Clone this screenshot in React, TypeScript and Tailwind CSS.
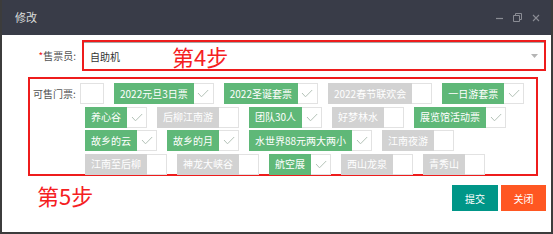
import React from "react";

type Item = { t: string; on: boolean };

const rows: Item[][] = [
  [
    { t: "2022元旦3日票", on: true },
    { t: "2022圣诞套票", on: true },
    { t: "2022春节联欢会", on: false },
    { t: "一日游套票", on: true },
  ],
  [
    { t: "养心谷", on: true },
    { t: "后柳江南游", on: false },
    { t: "团队30人", on: true },
    { t: "好梦林水", on: false },
    { t: "展览馆活动票", on: true },
  ],
  [
    { t: "故乡的云", on: true },
    { t: "故乡的月", on: true },
    { t: "水世界88元两大两小", on: true },
    { t: "江南夜游", on: false },
  ],
  [
    { t: "江南至后柳", on: false },
    { t: "神龙大峡谷", on: false },
    { t: "航空展", on: true },
    { t: "西山龙泉", on: false },
    { t: "青秀山", on: false },
  ],
];

function Check({ on }: { on: boolean }) {
  return (
    <span className="flex h-full w-[20px] items-center justify-center border border-l-0 border-[#e2e2e2] bg-white">
      {on && (
        <svg width="12" height="9" viewBox="0 0 12 9">
          <path d="M1 4 L4.5 7.8 L11.2 1" fill="none" stroke="#b3c2b7" strokeWidth="1" />
        </svg>
      )}
    </span>
  );
}

function Tag({ item }: { item: Item }) {
  return (
    <div className="flex h-[21px]">
      <span
        className={
          item.on
            ? "flex items-center bg-[#5fb878] px-[6px] text-[10px] leading-none text-white"
            : "flex items-center bg-[#d2d2d2] px-[6px] text-[10px] leading-none text-white"
        }
      >
        {item.t}
      </span>
      <Check on={item.on} />
    </div>
  );
}

export default function App() {
  return (
    <div className="flex h-[234px] w-[553px] flex-col border-x-2 border-b-2 border-[#3c3c3c] bg-white font-['Noto_Sans_CJK_SC',sans-serif]">
      <div className="flex h-[35px] shrink-0 items-center justify-between bg-[#393c48] pl-[13px] pr-[11px]">
        <span className="text-[11px] text-[#dcdcdc]">修改</span>
        <div className="flex items-center gap-[10px]">
          <svg width="7" height="8" viewBox="0 0 7 8">
            <path d="M0 4.5 H7" stroke="#8a8c94" strokeWidth="1.2" />
          </svg>
          <svg width="9" height="9" viewBox="0 0 9 9">
            <path d="M0.5 2.5 H6.5 V8.5 H0.5 Z M2.5 2.5 V0.5 H8.5 V6.5 H6.5" fill="none" stroke="#8a8c94" strokeWidth="1" />
          </svg>
          <svg width="8" height="8" viewBox="0 0 8 8">
            <path d="M1 1 L7 7 M7 1 L1 7" stroke="#8a8c94" strokeWidth="1.1" />
          </svg>
        </div>
      </div>

      <div className="flex flex-1 flex-col">
        <div className="mt-[5px] flex items-center">
          <div className="w-[74px] text-right text-[10px] text-[#555]">
            <span className="text-[#f02020]">*</span>售票员:
          </div>
          <div className="ml-[6px] h-[31px] w-[464px] border-2 border-[#ee1c1c]">
            <div className="flex h-full items-center border-t border-[#a8a8a8] pl-[6px] pr-[6px]">
              <span className="text-[10px] text-[#333]">自助机</span>
              <span className="ml-[52px] text-[22px] leading-none text-[#f5201f]">第4步</span>
              <svg className="ml-auto" width="7" height="5" viewBox="0 0 7 5">
                <path d="M0 0 H7 L3.5 4 Z" fill="#b5b5b5" />
              </svg>
            </div>
          </div>
        </div>

        <div className="ml-[26px] mt-[6px] flex h-[99px] w-[510px] border-2 border-[#ee1c1c] pt-[4px]">
          <div className="flex h-[21px] w-[50px] shrink-0 items-center pl-[3px] text-[10px] text-[#555]">
            可售门票:
          </div>
          <div className="flex flex-col gap-[2.5px]">
            <div className="flex gap-[10px]">
              <span className="h-[21px] w-[24px] border border-[#e2e2e2] bg-white" />
              {rows[0].map((it) => (
                <Tag key={it.t} item={it} />
              ))}
            </div>
            {rows.slice(1).map((r, i) => (
              <div key={i} className="ml-[5px] flex gap-[10px]">
                {r.map((it) => (
                  <Tag key={it.t} item={it} />
                ))}
              </div>
            ))}
          </div>
        </div>

        <div className="mt-[8px] flex items-start justify-between pl-[35px] pr-[5px]">
          <span className="text-[22px] leading-none text-[#f5201f]">第5步</span>
          <div className="mt-[1px] flex gap-[3px]">
            <button className="flex h-[26px] w-[46px] items-center justify-center bg-[#009688] text-[10px] text-white">
              提交
            </button>
            <button className="flex h-[26px] w-[45px] items-center justify-center bg-[#ff5722] text-[10px] text-white">
              关闭
            </button>
          </div>
        </div>
      </div>
    </div>
  );
}
